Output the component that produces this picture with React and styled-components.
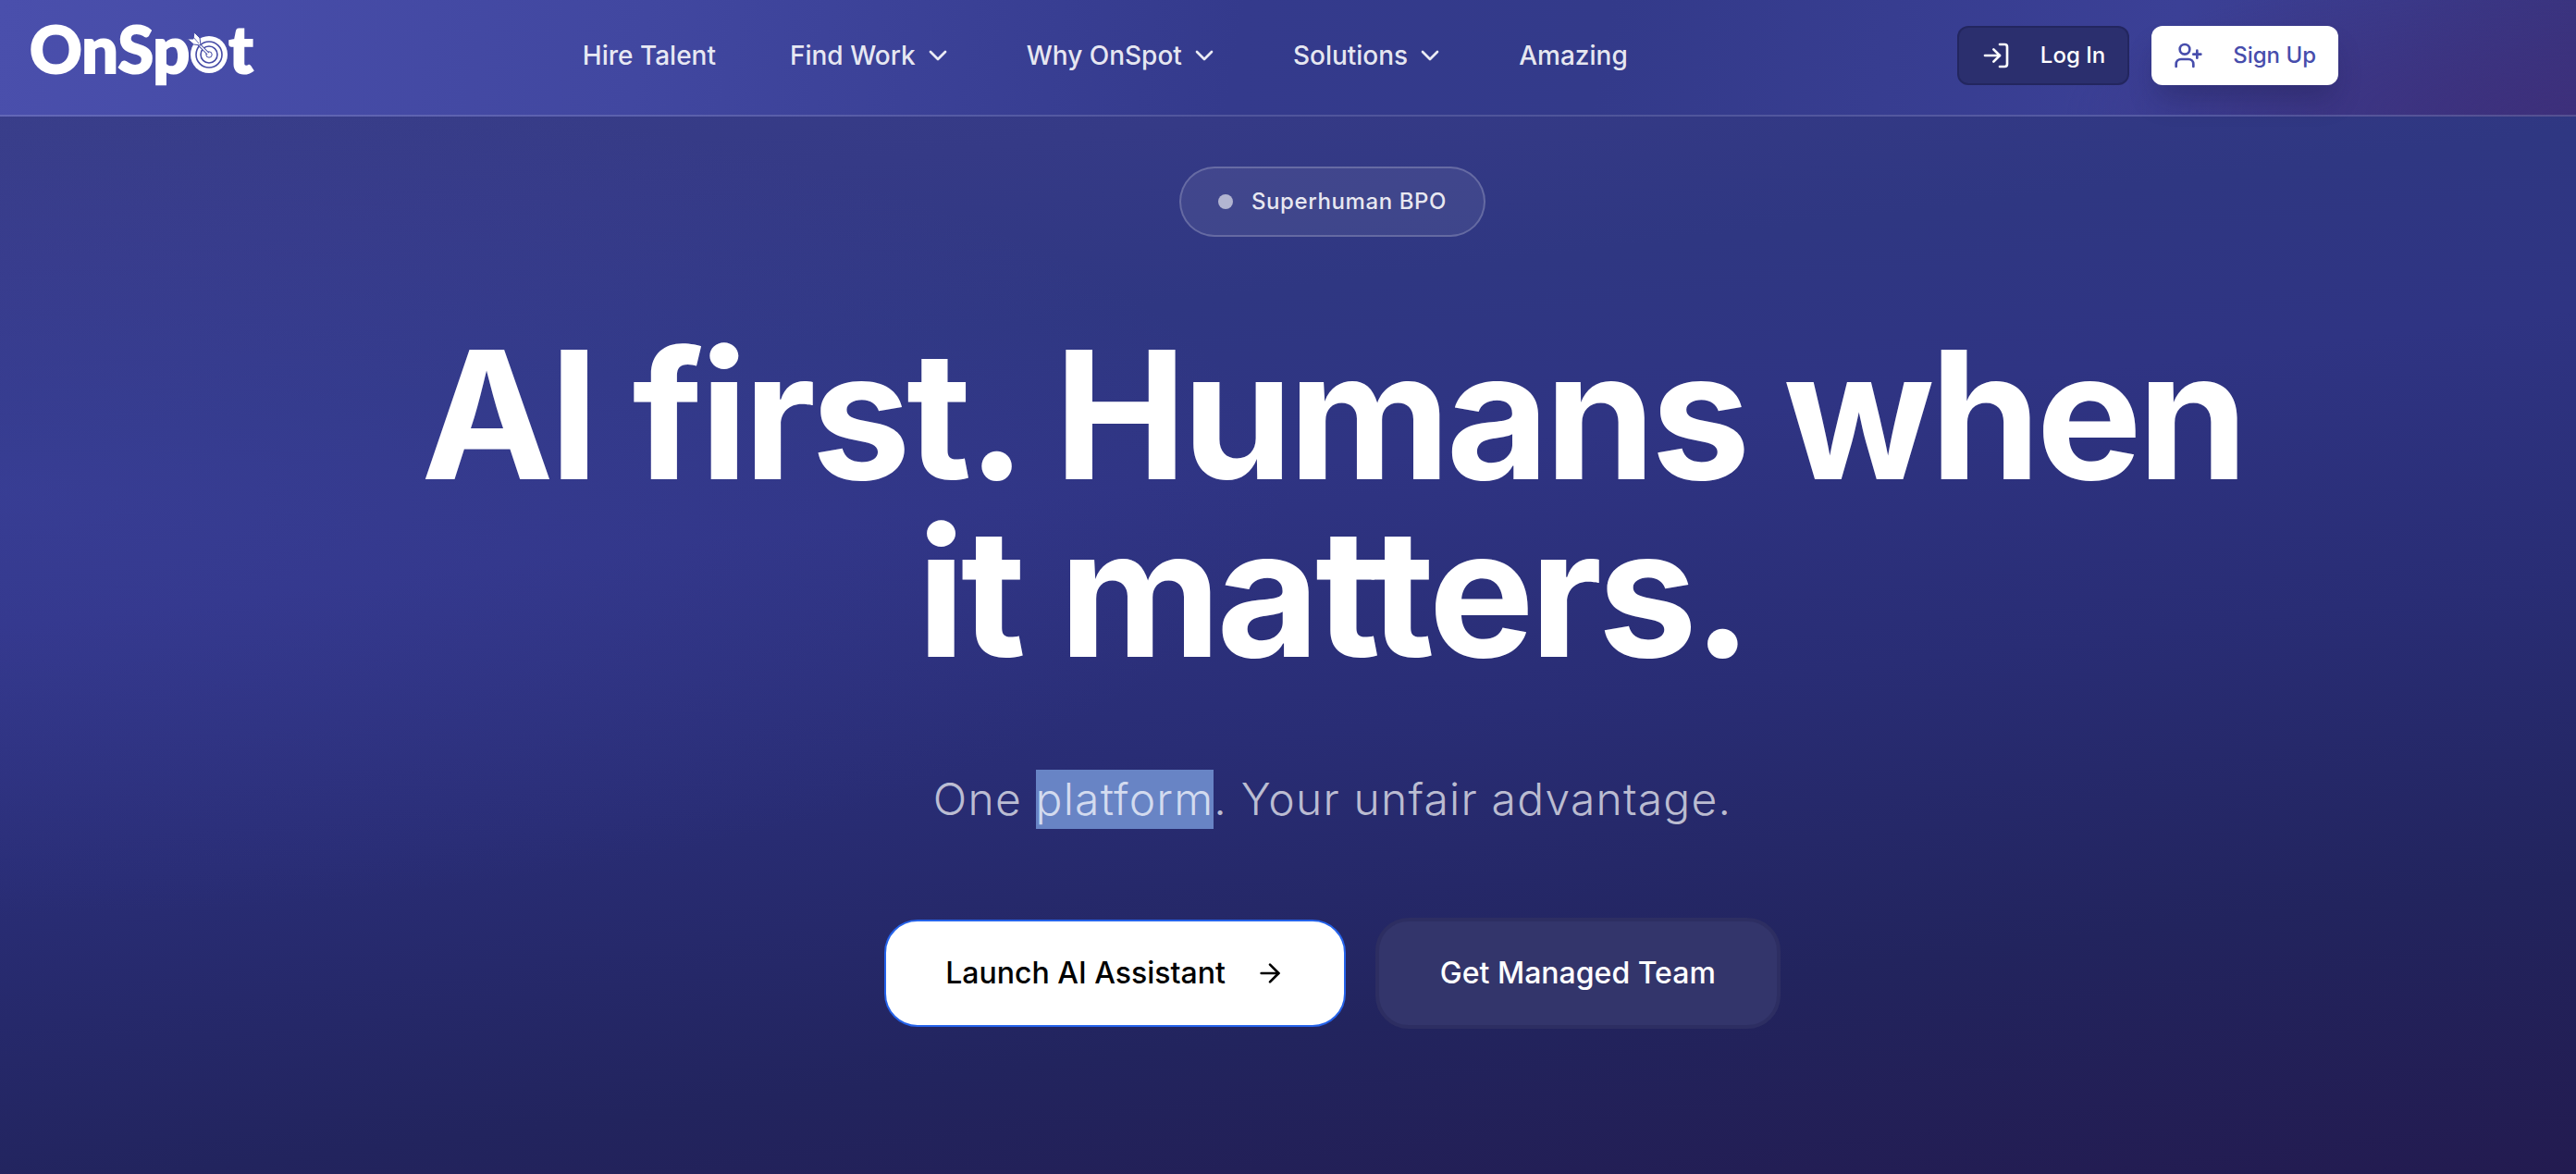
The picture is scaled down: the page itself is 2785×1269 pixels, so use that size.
import React from "react";
import styled, { createGlobalStyle } from "styled-components";
import { ArrowRight, ChevronDown, LogIn, UserPlus } from "lucide-react";

const GlobalStyle = createGlobalStyle`
  *, *::before, *::after { box-sizing: border-box; }
  body { margin: 0; background: #22265f; font-family: Inter, "Liberation Sans", sans-serif; -webkit-font-smoothing: antialiased; }
`;

const Page = styled.div`
  min-height: 100vh;
  display: flex;
  flex-direction: column;
  color: #fff;
  background:
    radial-gradient(50% 36% at 0% 42%, rgba(72, 74, 180, 0.35), rgba(72, 74, 180, 0) 100%),
    linear-gradient(173deg, #3b408a 0%, #353a86 18%, #2f3782 30%, #2f3483 42%, #292d75 60%, #22245e 80%, #231b50 100%);
`;

const Header = styled.header`
  border-bottom: 2px solid rgba(255, 255, 255, 0.14);
  background:
    radial-gradient(20% 130% at 100% 100%, rgba(62, 46, 122, 0.8), rgba(62, 46, 122, 0) 100%),
    linear-gradient(100deg, #4a4fac 0%, #4147a0 25%, #343a8c 48%, #333a8a 62%, #3b4096 84%, #39347f 100%);
`;

const HeaderInner = styled.div`
  max-width: 2560px;
  padding: 28px 32px 32px;
  display: flex;
  align-items: center;
  justify-content: space-between;
`;

const Logo = styled.a`
  display: flex;
  align-items: flex-start;
  height: 64px;
  color: #fff;
  text-decoration: none;
  font-family: Lato, Inter, sans-serif;
  font-size: 70px;
  line-height: 48px;
  font-weight: 900;
  -webkit-text-stroke: 2px #fff;
`;

const Target = styled.svg`
  width: 42px;
  height: 54px;
  flex: none;
  overflow: visible;
`;

const Nav = styled.nav`
  display: flex;
  align-items: center;
  gap: 80px;
`;

const navItem = `
  display: flex;
  align-items: center;
  gap: 8px;
  padding: 0;
  border: 0;
  background: none;
  color: rgba(255, 255, 255, 0.9);
  font: 500 28px/40px Inter, "Liberation Sans", sans-serif;
  text-decoration: none;
  cursor: pointer;
`;
const NavLink = styled.a`${navItem}`;
const NavButton = styled.button`${navItem}`;

const Actions = styled.div`
  display: flex;
  gap: 24px;
`;

const ActionButton = styled.button`
  display: flex;
  align-items: center;
  gap: 32px;
  height: 64px;
  padding: 0 24px;
  border: ${(p) => (p.$solid ? "0" : "2px solid rgba(20, 22, 70, 0.35)")};
  border-radius: 12px;
  background: ${(p) => (p.$solid ? "#fff" : "#2b2f6e")};
  box-shadow: ${(p) => (p.$solid ? "0 20px 30px -6px rgba(20, 20, 60, 0.28)" : "none")};
  color: ${(p) => (p.$solid ? "#474dac" : "#fff")};
  font: 500 24px/32px Inter, "Liberation Sans", sans-serif;
  cursor: pointer;
`;

const Hero = styled.main`
  flex: 1;
  display: flex;
  flex-direction: column;
  align-items: center;
  padding: 54px 0 96px 96px;
  text-align: center;
`;

const Pill = styled.div`
  display: flex;
  align-items: center;
  gap: 20px;
  height: 76px;
  padding: 0 40px;
  border: 2px solid rgba(255, 255, 255, 0.2);
  border-radius: 38px;
  background: rgba(255, 255, 255, 0.07);
  color: rgba(255, 255, 255, 0.9);
  font-size: 24px;
  line-height: 32px;
  font-weight: 500;
  letter-spacing: 0.025em;
`;

const Dot = styled.span`
  width: 16px;
  height: 16px;
  border-radius: 50%;
  background: rgba(255, 255, 255, 0.6);
`;

const Title = styled.h1`
  max-width: 2048px;
  margin: 96px 0;
  font-size: 192px;
  line-height: 192px;
  font-weight: 700;
  letter-spacing: -0.025em;
`;

const Subtitle = styled.p`
  margin: 0 0 96px;
  color: rgba(255, 255, 255, 0.7);
  font-size: 48px;
  line-height: 64px;
  font-weight: 300;
  letter-spacing: 0.025em;
`;

const Highlight = styled.mark`
  display: inline-block;
  background: #6884c5;
  color: #d3dbef;
`;

const Ctas = styled.div`
  display: flex;
  align-items: center;
  gap: 32px;
`;

const Cta = styled.button`
  display: flex;
  align-items: center;
  gap: 32px;
  height: ${(p) => (p.$primary ? 116 : 120)}px;
  padding: 0 ${(p) => (p.$primary ? 64 : 66)}px;
  border: ${(p) => (p.$primary ? "2px solid #2563eb" : "4px solid #2d2e62")};
  border-radius: 36px;
  background: ${(p) => (p.$primary ? "#fff" : "#33356b")};
  color: ${(p) => (p.$primary ? "#000" : "#fff")};
  font: 500 32px/48px Inter, "Liberation Sans", sans-serif;
  cursor: pointer;
`;

function TargetMark() {
  return (
    <Target viewBox="0 -4 42 54" aria-hidden="true">
      <circle cx="21" cy="27" r="20" fill="#fff" />
      <g fill="none" stroke="#464ca6">
        <circle cx="21" cy="27" r="14" strokeWidth="1.6" />
        <circle cx="21" cy="27" r="9" strokeWidth="1.6" />
        <circle cx="21" cy="27" r="3.2" strokeWidth="1" />
      </g>
      <path d="M8 14 L20 26" stroke="#464ca6" strokeWidth="3.4" />
      <path d="M8 14 L21 27" stroke="#fff" strokeWidth="1.6" />
      <path
        d="M5 3 L11 9 L12 17 L4.500 16 L-2.500 10 L4 10 Z"
        fill="#fff"
        stroke="#464ca6"
        strokeWidth="1"
      />
      <path d="M4 8 L10 15" stroke="#464ca6" strokeWidth="0.800" />
    </Target>
  );
}

export default function App() {
  return (
    <>
      <GlobalStyle />
      <Page>
        <Header>
          <HeaderInner>
            <Logo href="#" aria-label="OnSpot">
              <span>OnSp</span>
              <TargetMark />
              <span>t</span>
            </Logo>
            <Nav>
              <NavLink href="#hire">Hire Talent</NavLink>
              {["Find Work", "Why OnSpot", "Solutions"].map((label) => (
                <NavButton key={label} type="button">
                  {label}
                  <ChevronDown size={32} />
                </NavButton>
              ))}
              <NavLink href="#amazing">Amazing</NavLink>
            </Nav>
            <Actions>
              <ActionButton type="button">
                <LogIn size={32} />
                Log In
              </ActionButton>
              <ActionButton type="button" $solid>
                <UserPlus size={32} />
                Sign Up
              </ActionButton>
            </Actions>
          </HeaderInner>
        </Header>
        <Hero>
          <Pill>
            <Dot />
            Superhuman BPO
          </Pill>
          <Title>AI first. Humans when it matters.</Title>
          <Subtitle>
            One <Highlight>platform</Highlight>. Your unfair advantage.
          </Subtitle>
          <Ctas>
            <Cta type="button" $primary>
              Launch AI Assistant
              <ArrowRight size={32} />
            </Cta>
            <Cta type="button">Get Managed Team</Cta>
          </Ctas>
        </Hero>
      </Page>
    </>
  );
}
